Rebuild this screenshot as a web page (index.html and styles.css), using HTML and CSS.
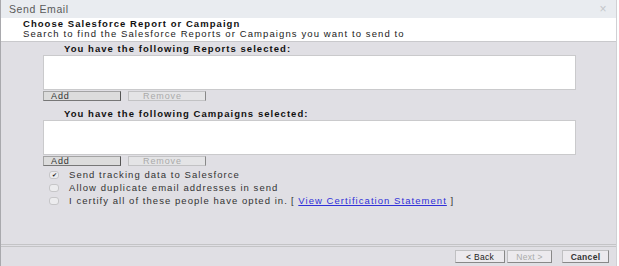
FILE: index.html
```html
<!DOCTYPE html>
<html lang="en">
<head>
    <meta charset="UTF-8">
    <meta name="viewport" content="width=device-width, initial-scale=1.0">
    <title>Send Email</title>
    <link rel="stylesheet" href="styles.css">
</head>
<body>
    <div class="dialog">
        <div class="titlebar">
            <span>Send Email</span>
            <span class="close">&#215;</span>
        </div>
        <div class="intro">
            <div class="intro-title">Choose Salesforce Report or Campaign</div>
            <div class="intro-sub">Search to find the Salesforce Reports or Campaigns you want to send to</div>
        </div>
        <div class="content">
            <div class="picker">
                <div class="picker-label">You have the following Reports selected:</div>
                <div class="listbox"></div>
                <div class="btn-row">
                    <button class="small-btn">Add</button>
                    <button class="small-btn" disabled>Remove</button>
                </div>
            </div>
            <div class="picker last">
                <div class="picker-label">You have the following Campaigns selected:</div>
                <div class="listbox"></div>
                <div class="btn-row">
                    <button class="small-btn">Add</button>
                    <button class="small-btn" disabled>Remove</button>
                </div>
            </div>
            <div class="options">
                <label class="option"><span class="check checked">&#10004;</span>Send tracking data to Salesforce</label>
                <label class="option"><span class="check"></span>Allow duplicate email addresses in send</label>
                <label class="option"><span class="check"></span>I certify all of these people have opted in.<span class="bracket">[ <a href="#">View Certification Statement</a> ]</span></label>
            </div>
        </div>
        <div class="footer">
            <button class="nav-btn">&lt; Back</button>
            <button class="nav-btn" disabled>Next &gt;</button>
            <button class="nav-btn cancel">Cancel</button>
        </div>
    </div>
</body>
</html>
```

FILE: styles.css
```css
body {
    margin: 0;
    font-family: "Liberation Sans", Arial, sans-serif;
    background: #fff;
}
.dialog {
    width: 617px;
    height: 266px;
    display: flex;
    flex-direction: column;
    border-left: 1px solid #a9a9ad;
    border-right: 1px solid #d0d0d4;
    box-sizing: border-box;
}
.titlebar {
    height: 18px;
    background: #e9ecf0;
    color: #5a5a5a;
    font-size: 10.5px;
    letter-spacing: 0.6px;
    display: flex;
    align-items: center;
    justify-content: space-between;
    padding: 0 9px 0 8px;
}
.close {
    color: #c3c6ca;
    font-size: 12px;
}
.intro {
    background: #fff;
    height: 22px;
    padding: 1px 0 0 22px;
    border-bottom: 1px solid #c9c9cc;
    font-size: 9.5px;
    letter-spacing: 1.1px;
    line-height: 10px;
}
.intro-title {
    font-weight: bold;
    color: #111;
    letter-spacing: 1.05px;
}
.intro-sub {
    color: #222;
}
.content {
    flex: 1;
    background: #e0dfe4;
    padding: 1px 40px 0 42px;
}
.picker {
    margin-bottom: 7px;
}
.picker.last {
    margin-bottom: 0;
}
.picker-label {
    font-size: 9.5px;
    font-weight: bold;
    letter-spacing: 1.05px;
    color: #111;
    padding-left: 21px;
    height: 12px;
    line-height: 12px;
}
.listbox {
    height: 33px;
    background: #fff;
    border: 1px solid #cacacc;
    margin-bottom: 1px;
}
.btn-row {
    display: flex;
    gap: 7px;
}
.small-btn {
    width: 78px;
    height: 10px;
    padding: 0 0 0 7px;
    text-align: left;
    font-family: inherit;
    font-size: 9px;
    letter-spacing: 0.9px;
    line-height: 8px;
    color: #333;
    background: #dcdcdc;
    border: 1px solid #a4a4a4;
    border-right-color: #555;
    border-bottom-color: #777;
    box-sizing: border-box;
}
.small-btn:disabled {
    color: #aaa;
    background: #e4e4e6;
    border-color: #c2c2c4;
    border-right-color: #888;
    padding-left: 14px;
}
.options {
    padding: 2px 0 0 6px;
}
.option {
    display: flex;
    align-items: center;
    height: 13px;
    font-size: 9.5px;
    letter-spacing: 1.05px;
    color: #333;
}
.check {
    width: 8px;
    height: 6px;
    border: 1px solid #c6c6c8;
    border-radius: 3px;
    background: #ececee;
    margin-right: 10px;
    font-size: 6px;
    line-height: 6px;
    text-align: center;
    color: #222;
    letter-spacing: 0;
}
.bracket {
    margin-left: 3px;
}
.bracket a {
    color: #3030d8;
}
.footer {
    height: 19px;
    background: #e0dfe4;
    border-top: 3px double #c4c4c6;
    display: flex;
    justify-content: flex-end;
    align-items: center;
    gap: 2px;
    padding-right: 7px;
}
.nav-btn {
    height: 13px;
    width: 50px;
    padding: 0;
    font-family: inherit;
    font-size: 8.5px;
    letter-spacing: 0.3px;
    color: #222;
    background: #eceaee;
    border: 1px solid #c0c0c2;
    border-right-color: #888;
    border-bottom-color: #888;
}
.nav-btn:disabled {
    width: 45px;
    color: #aaa;
}
.nav-btn.cancel {
    width: 47px;
    margin-left: 8px;
    font-weight: bold;
    color: #333;
}
```
